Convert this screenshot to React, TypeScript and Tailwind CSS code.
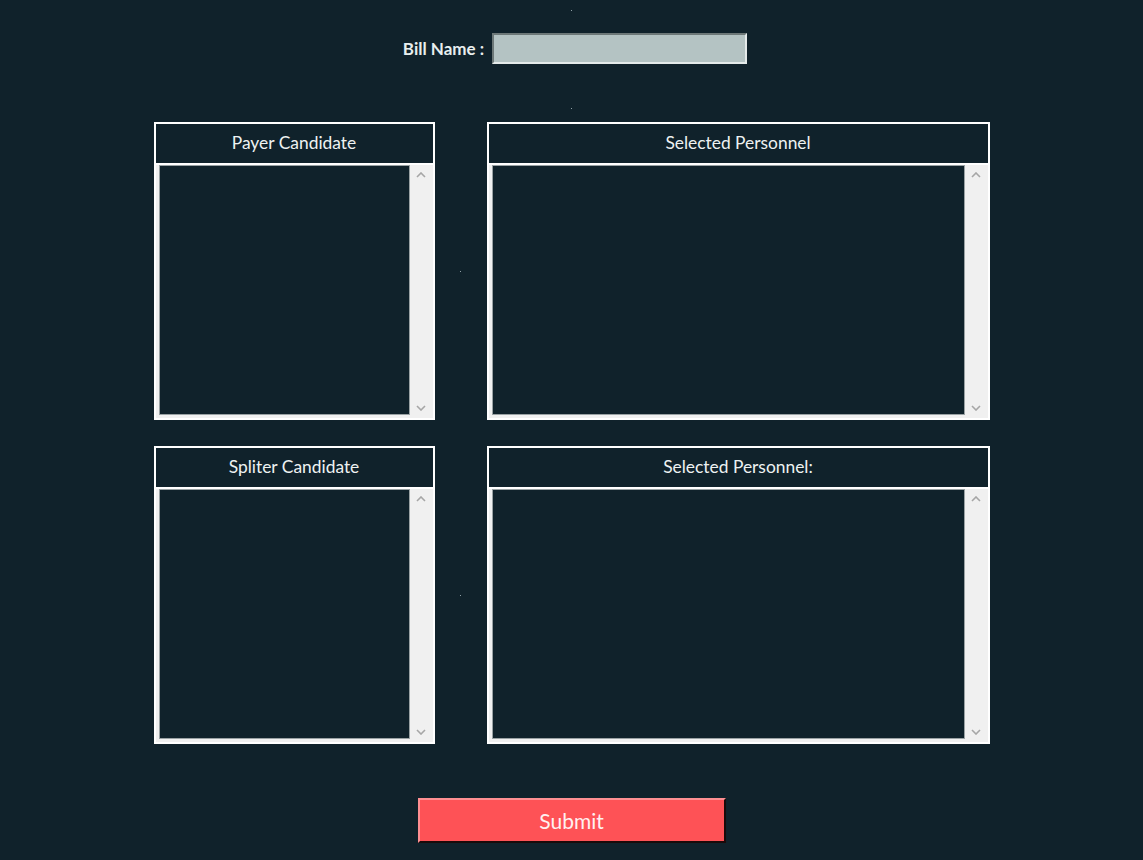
import React from 'react';

const Dot = () => <div className="w-px h-px bg-[#8fa0a6]" />;

const Chevron = ({ up }: { up?: boolean }) => (
    <svg width="10" height="6" viewBox="0 0 10 6" className="block">
        <path d={up ? 'M1 5 L5 1 L9 5' : 'M1 1 L5 5 L9 1'} fill="none" stroke="#a6a6a6" strokeWidth="1.6" />
    </svg>
);

const ListPanel = ({ title }: { title: string }) => {
    return (
        <div className="flex flex-col h-[298px] border-2 border-white">
            <div className="h-[41px] shrink-0 flex items-center justify-center border-b-2 border-white text-[17.4px] text-[#eef2f2]">
                {title}
            </div>
            <div className="flex flex-1 bg-[#f0f0f0]">
                <div className="flex-1 ml-[3px] mb-[3px] bg-[#10222b] border border-[#9aa2a4]" />
                <div className="w-[23px] flex flex-col items-center justify-between py-[7px]">
                    <Chevron up />
                    <Chevron />
                </div>
            </div>
        </div>
    );
};

const App = (): JSX.Element => {
    return (
        <div className="w-full h-[860px] bg-[#10222b] flex flex-col items-center pt-[10px] font-['Lato','Noto_Sans',sans-serif]">
            <Dot />
            <div className="flex items-center gap-[8px] mt-[22px] ml-[7px]">
                <span className="text-[17px] font-bold text-[#e8eeee]">Bill Name :</span>
                <input
                    className="w-[255px] h-[31px] bg-[#b4c3c3] border-2 border-t-[#6d7878] border-l-[#6d7878] border-b-[#e4eaea] border-r-[#e4eaea] outline-none px-1"
                    type="text"
                />
            </div>
            <div className="mt-[44px]">
                <Dot />
            </div>
            <div className="mt-[13px] grid grid-cols-[281px_52px_503px] gap-y-[26px]">
                <ListPanel title="Payer Candidate" />
                <div className="flex items-center justify-center">
                    <Dot />
                </div>
                <ListPanel title="Selected Personnel" />
                <ListPanel title="Spliter Candidate" />
                <div className="flex items-center justify-center">
                    <Dot />
                </div>
                <ListPanel title="Selected Personnel:" />
            </div>
            <button
                className="mt-[54px] w-[308px] h-[45px] bg-[#fe5256] text-[#fff0f0] text-[21px] border-2 border-t-[#ff8f92] border-l-[#ff8f92] border-b-[#1a0a0a] border-r-[#1a0a0a]"
                type="button"
            >
                Submit
            </button>
        </div>
    );
};

export default App;
